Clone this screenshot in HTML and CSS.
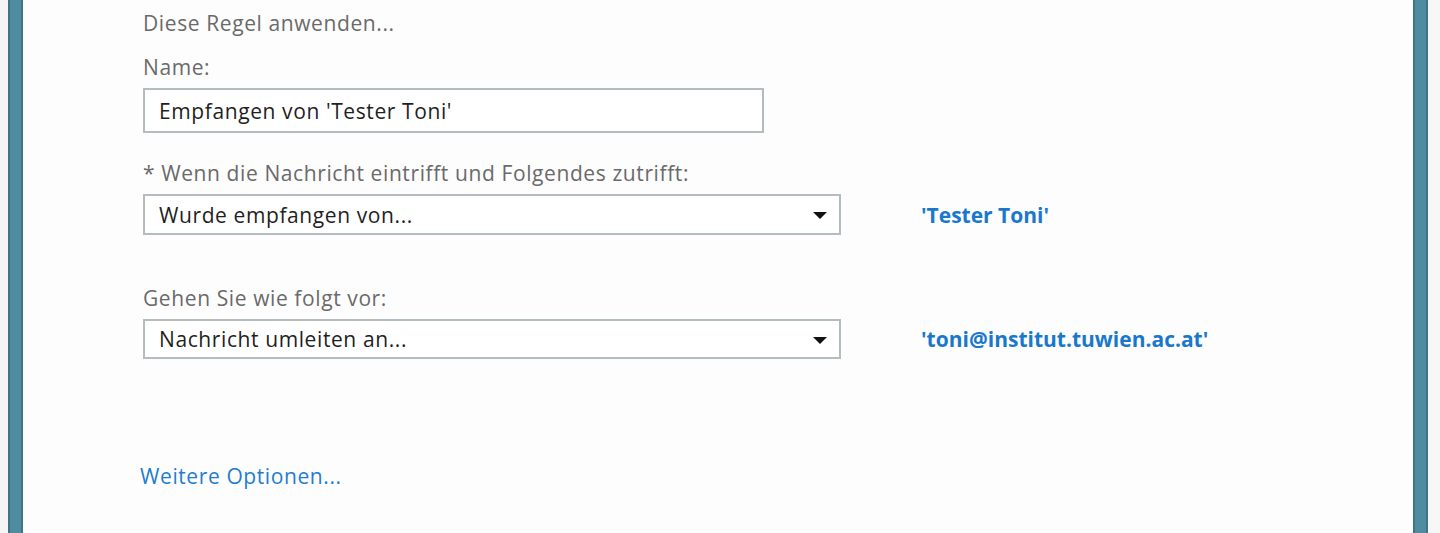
FILE: index.html
```html
<!DOCTYPE html>
<html lang="de">
<head>
<meta charset="utf-8">
<title>Regel</title>
<link rel="stylesheet" href="styles.css">
</head>
<body>
<div class="frame">
  <div class="edge edge-left"></div>
  <div class="bar"></div>
  <main class="content">
    <div class="label first">Diese Regel anwenden...</div>
    <div class="label name-label">Name:</div>
    <div class="input">Empfangen von 'Tester Toni'</div>

    <div class="label cond-label">* Wenn die Nachricht eintrifft und Folgendes zutrifft:</div>
    <div class="row">
      <div class="select">
        <span>Wurde empfangen von...</span>
        <span class="arrow"></span>
      </div>
      <a class="value">'Tester Toni'</a>
    </div>

    <div class="label action-label">Gehen Sie wie folgt vor:</div>
    <div class="row">
      <div class="select select-b">
        <span>Nachricht umleiten an...</span>
        <span class="arrow"></span>
      </div>
      <a class="value">'toni@institut.tuwien.ac.at'</a>
    </div>

    <a class="more">Weitere Optionen...</a>
  </main>
  <div class="bar"></div>
  <div class="edge edge-right"></div>
</div>
</body>
</html>
```
FILE: styles.css
```css
html, body {
  margin: 0;
  padding: 0;
  height: 100%;
  background: #fdfdfd;
}

.frame {
  display: flex;
  height: 533px;
  font-family: "Open Sans", "Noto Sans", sans-serif;
  font-size: 21px;
  letter-spacing: 0.6px;
}

.edge {
  flex: none;
  background: #f4f5f5;
}
.edge-left { width: 8px; }
.edge-right { width: 12px; background: #f7f7f7; }

.bar {
  flex: none;
  width: 11px;
  background: #4f8c9f;
  border-left: 2px solid #3f7486;
  border-right: 2px solid #3f7486;
}

.content {
  flex: 1;
  background: #fdfdfd;
  padding: 9px 0 0 120px;
  display: flex;
  flex-direction: column;
  align-items: flex-start;
}

.label {
  color: #6a6a6a;
  line-height: 28px;
  height: 28px;
}
.name-label { margin-top: 16px; }
.cond-label { margin-top: 26px; }
.action-label { margin-top: 49px; }

.input {
  margin-top: 7px;
  box-sizing: border-box;
  width: 621px;
  height: 45px;
  border: 2px solid #b3bdc0;
  background: #fff;
  color: #1f1f1f;
  padding-left: 14px;
  display: flex;
  align-items: center;
}

.row {
  margin-top: 7px;
  display: flex;
  align-items: center;
}

.select {
  box-sizing: border-box;
  width: 698px;
  height: 41px;
  border: 2px solid #b3bdc0;
  background: #fff;
  color: #1f1f1f;
  padding: 0 12px 0 14px;
  display: flex;
  align-items: center;
  justify-content: space-between;
}
.select-b { height: 40px; }

.arrow {
  width: 0;
  height: 0;
  border-left: 7px solid transparent;
  border-right: 7px solid transparent;
  border-top: 7px solid #111;
  margin-top: 2px;
}

.value {
  margin-left: 80px;
  color: #1a78cc;
  font-weight: 700;
  letter-spacing: 0;
}

.more {
  margin-top: 103px;
  margin-left: -3px;
  color: #1f7dd0;
  line-height: 28px;
}
```
